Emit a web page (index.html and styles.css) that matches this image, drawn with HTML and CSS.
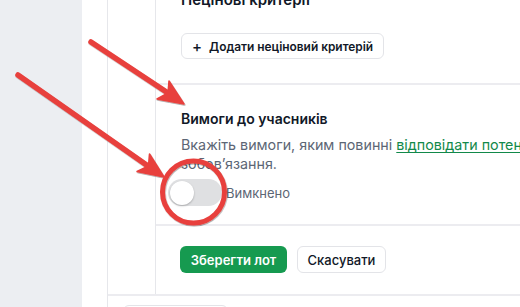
FILE: index.html
```html
<!DOCTYPE html>
<html lang="uk">
<head>
<meta charset="utf-8">
<title>Лот</title>
<link rel="stylesheet" href="styles.css">
</head>
<body>
<div class="page">
  <aside class="sidebar"></aside>
  <main class="main">
    <div class="panel">
      <div class="panel-top">
        <div class="gutter"></div>
        <div class="card">
          <section class="section section-first">
            <h3 class="title title-lg">Неціновi критерії</h3>
            <button class="btn btn-outline btn-add"><span class="plus">+</span>Додати неціновий критерій</button>
          </section>
          <section class="section section-req">
            <h3 class="title">Вимоги до учасників</h3>
            <p class="desc">Вкажіть вимоги, яким повинні <a class="link" href="#">відповідати потенційні учасники</a> для виконання зобов’язання.</p>
            <div class="switch-row">
              <span class="switch"><span class="knob"></span></span>
              <span class="switch-label">Вимкнено</span>
            </div>
          </section>
          <section class="section section-actions">
            <button class="btn btn-primary">Зберегти лот</button>
            <button class="btn btn-outline btn-cancel">Скасувати</button>
          </section>
        </div>
      </div>
      <div class="panel-bottom">
        <div class="ghost-box"></div>
      </div>
    </div>
  </main>
  <svg class="annot" width="520" height="307" viewBox="0 0 520 307">
    <defs>
      <filter id="sh" x="-10%" y="-10%" width="120%" height="120%">
        <feDropShadow dx="0.6" dy="1" stdDeviation="0.6" flood-color="#000" flood-opacity="0.35"/>
      </filter>
    </defs>
    <g filter="url(#sh)" fill="#e8403d" stroke="#e8403d">
      <line x1="91" y1="42" x2="168" y2="93" stroke-width="5.5" stroke-linecap="round"/>
      <polygon points="184,104 157,99 168,93 169,81" stroke-width="1.5" stroke-linejoin="round"/>
      <line x1="18" y1="75" x2="148" y2="166" stroke-width="5.5" stroke-linecap="round"/>
      <polygon points="164,177 137,171.5 148.5,166 149.5,154" stroke-width="1.5" stroke-linejoin="round"/>
      <circle cx="193.5" cy="192" r="31" fill="none" stroke-width="5"/>
    </g>
  </svg>
</div>
</body>
</html>
```
FILE: styles.css
```css
* { box-sizing: border-box; }
html, body { margin: 0; padding: 0; }
body {
  font-family: Inter, "Noto Sans", "Liberation Sans", sans-serif;
  color: #111827;
  background: #fff;
}
.page {
  position: relative;
  display: flex;
  width: 520px;
  height: 307px;
  overflow: hidden;
}
.sidebar {
  width: 82px;
  flex: none;
  background: #eceef2;
}
.main {
  flex: 1;
  min-width: 0;
  padding-left: 25px;
  background: #fff;
}
.panel {
  height: 100%;
  border-left: 1px solid #e6e7eb;
  display: flex;
  flex-direction: column;
}
.panel-top {
  display: flex;
  height: 294px;
  flex: none;
}
.gutter { width: 47px; flex: none; }
.card {
  flex: 1;
  min-width: 0;
  border-left: 1px solid #e6e7eb;
  display: flex;
  flex-direction: column;
}
.section {
  padding-left: 25px;
  border-bottom: 2px solid #ececf0;
}
.section-first {
  margin-top: -10px;
  height: 95px;
}
.title {
  margin: 0;
  font-size: 14px;
  line-height: 20px;
  font-weight: 600;
  color: #111827;
  white-space: nowrap;
}
.title-lg {
  font-size: 15px;
  margin-bottom: 23px;
}
.btn {
  font-family: inherit;
  font-size: 13px;
  font-weight: 600;
  border-radius: 6px;
  height: 27px;
  padding: 0 12px;
  cursor: pointer;
  display: inline-flex;
  align-items: center;
  justify-content: center;
  white-space: nowrap;
}
.btn-outline {
  background: #fff;
  border: 1px solid #e3e4e8;
  color: #111827;
}
.btn-add {
  height: 26px;
  padding: 0 10px;
  font-size: 11.9px;
}
.plus {
  font-weight: 500;
  font-size: 15px;
  margin-right: 7px;
}
.section-req {
  height: 141px;
  padding-top: 24px;
}
.desc {
  margin: 6px 0 0 0;
  width: 600px;
  font-size: 14.3px;
  line-height: 19px;
  color: #5c6675;
}
.desc .link {
  color: #12894a;
  text-decoration: underline;
  text-underline-offset: 2px;
}
.switch-row {
  display: flex;
  align-items: center;
  margin-top: 6px;
  margin-left: -13px;
  gap: 4px;
}
.switch {
  width: 54px;
  height: 27px;
  border-radius: 14px;
  background: #dfe0e2;
  display: flex;
  align-items: center;
  padding: 0 2px;
}
.knob {
  width: 24px;
  height: 24px;
  border-radius: 50%;
  background: #fff;
  box-shadow: 0 1px 2px rgba(0,0,0,0.25);
}
.switch-label {
  font-size: 13px;
  color: #5c6675;
}
.section-actions {
  flex: 1;
  border-bottom: none;
  padding-top: 20px;
  padding-left: 24px;
  display: flex;
  align-items: flex-start;
  gap: 10px;
}
.btn-primary {
  background: #169a50;
  color: #fff;
  border: none;
  width: 107px;
}
.btn-cancel {
  width: 89px;
  font-weight: 500;
}
.panel-bottom {
  flex: 1;
  border-top: 2px solid #ececf0;
  padding: 9px 0 0 15px;
}
.ghost-box {
  width: 105px;
  height: 20px;
  border: 1px solid #e3e4e8;
  border-radius: 6px;
}
.annot {
  position: absolute;
  left: 0;
  top: 0;
  pointer-events: none;
}
```
